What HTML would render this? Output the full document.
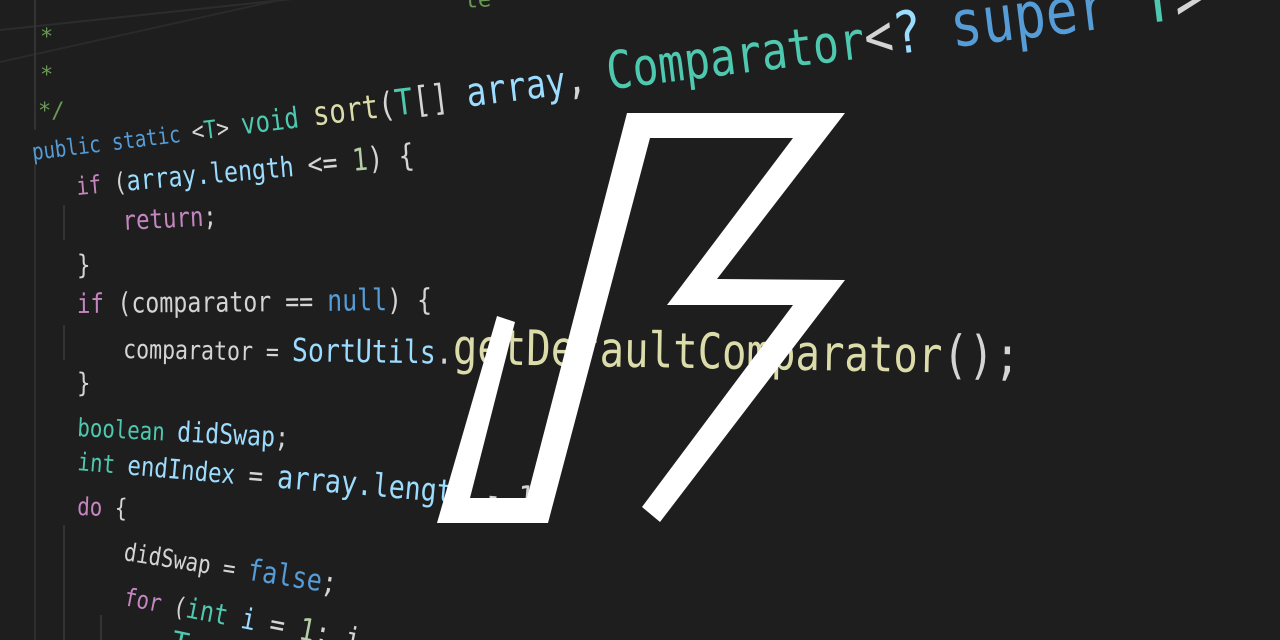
<!DOCTYPE html>
<html><head><meta charset="utf-8"><style>
html,body{margin:0;padding:0;background:#1e1e1e;}
svg{display:block}
text{font-family:"DejaVu Sans Mono","Liberation Mono",monospace;}
</style></head><body>
<svg width="1280" height="640" viewBox="0 0 1280 640" xmlns="http://www.w3.org/2000/svg">
<rect width="1280" height="640" fill="#1e1e1e"/>
<line x1="0" y1="30" x2="330" y2="-5" stroke="#2c2c2c" stroke-width="2"/>
<line x1="0" y1="62" x2="280" y2="0" stroke="#2a2a2a" stroke-width="2"/>
<line x1="35" y1="0" x2="35" y2="130" stroke="#3a3a3a" stroke-width="1.5"/>
<line x1="35" y1="165" x2="35" y2="640" stroke="#333" stroke-width="1.5"/>
<line x1="64" y1="205" x2="64" y2="240" stroke="#3a3a3a" stroke-width="1.5"/>
<line x1="64" y1="325" x2="64" y2="360" stroke="#3a3a3a" stroke-width="1.5"/>
<line x1="64" y1="525" x2="64" y2="640" stroke="#3a3a3a" stroke-width="1.5"/>
<line x1="101" y1="615" x2="101" y2="640" stroke="#3a3a3a" stroke-width="1.5"/>

<g fill="#6a9955" font-size="22">
<text x="40" y="44">*</text>
<text x="40" y="82">*</text>
<text x="38" y="118">*/</text>
<text x="465" y="8" transform="rotate(-4 465 8)">te</text>
</g>

<g transform="translate(33 160) rotate(-7) scale(0.83 1)">
<text x="0" y="0" fill="#569cd6"><tspan font-size="23">public static </tspan><tspan font-size="25" fill="#d4d4d4">&lt;</tspan><tspan font-size="25" fill="#4ec9b0">T</tspan><tspan font-size="25" fill="#d4d4d4">&gt; </tspan><tspan font-size="29" fill="#4ec9b0">void </tspan><tspan font-size="33" fill="#dcdcaa">sort</tspan><tspan font-size="34" fill="#d4d4d4">(</tspan><tspan font-size="36" fill="#4ec9b0">T</tspan><tspan font-size="36" fill="#d4d4d4">[] </tspan><tspan font-size="40" fill="#9cdcfe">array</tspan><tspan font-size="42" fill="#d4d4d4">, </tspan><tspan font-size="52" fill="#4ec9b0">Comparator</tspan><tspan font-size="58" fill="#d4d4d4">&lt;</tspan><tspan font-size="58" fill="#9cdcfe">? </tspan><tspan font-size="64" fill="#569cd6">super </tspan><tspan font-size="67" fill="#4ec9b0">T</tspan><tspan font-size="67" fill="#d4d4d4">&gt;</tspan></text></g>

<g transform="translate(77 195) rotate(-5) scale(0.83 1)">
<text x="0" y="0" fill="#d4d4d4"><tspan font-size="25" fill="#c586c0">if </tspan><tspan font-size="26">(</tspan><tspan font-size="28" fill="#9cdcfe">array.length </tspan><tspan font-size="30">&lt;= </tspan><tspan font-size="31" fill="#b5cea8">1</tspan><tspan font-size="31">) {</tspan></text></g>

<g transform="translate(123 230) rotate(-3) scale(0.83 1)">
<text x="0" y="0" font-size="27"><tspan fill="#c586c0">return</tspan><tspan fill="#d4d4d4">;</tspan></text></g>

<g transform="translate(77 274) scale(0.83 1)"><text x="0" y="0" font-size="27" fill="#d4d4d4">}</text></g>

<g transform="translate(77 313) rotate(-0.5) scale(0.83 1)">
<text x="0" y="0" fill="#d4d4d4"><tspan font-size="27" fill="#c586c0">if </tspan><tspan font-size="28">(comparator == </tspan><tspan font-size="30" fill="#569cd6">null</tspan><tspan font-size="30">) {</tspan></text></g>

<g transform="translate(123 358) rotate(1) scale(0.83 1)">
<text x="0" y="0" fill="#d4d4d4"><tspan font-size="26">comparator = </tspan><tspan font-size="32" fill="#9cdcfe">SortUtils</tspan><tspan font-size="34">.</tspan><tspan font-size="49" fill="#dcdcaa">getDefaultComparator</tspan><tspan font-size="52">();</tspan></text></g>

<g transform="translate(77 392) scale(0.83 1)"><text x="0" y="0" font-size="27" fill="#d4d4d4">}</text></g>

<g transform="translate(77 436) rotate(3) scale(0.83 1)">
<text x="0" y="0"><tspan font-size="25" fill="#4ec9b0">boolean </tspan><tspan font-size="28" fill="#9cdcfe">didSwap</tspan><tspan font-size="28" fill="#d4d4d4">;</tspan></text></g>

<g transform="translate(77 470) rotate(5) scale(0.83 1)">
<text x="0" y="0"><tspan font-size="25" fill="#4ec9b0">int </tspan><tspan font-size="27" fill="#9cdcfe">endIndex </tspan><tspan font-size="29" fill="#d4d4d4">= </tspan><tspan font-size="32" fill="#9cdcfe">array.length</tspan><tspan font-size="33" fill="#d4d4d4"> - 1;</tspan></text></g>

<g transform="translate(77 515) rotate(2) scale(0.83 1)">
<text x="0" y="0" font-size="25"><tspan fill="#c586c0">do </tspan><tspan fill="#d4d4d4">{</tspan></text></g>

<g transform="translate(123 560) rotate(9) scale(0.83 1)">
<text x="0" y="0"><tspan font-size="25" fill="#d4d4d4">didSwap = </tspan><tspan font-size="30" fill="#569cd6">false</tspan><tspan font-size="30" fill="#d4d4d4">;</tspan></text></g>

<g transform="translate(123 605) rotate(11) scale(0.83 1)">
<text x="0" y="0"><tspan font-size="25" fill="#c586c0">for </tspan><tspan font-size="26" fill="#d4d4d4">(</tspan><tspan font-size="28" fill="#4ec9b0">int </tspan><tspan font-size="29" fill="#9cdcfe">i </tspan><tspan font-size="30" fill="#d4d4d4">= </tspan><tspan font-size="31" fill="#b5cea8">1</tspan><tspan font-size="31" fill="#d4d4d4">; i</tspan></text></g>

<text x="170" y="650" transform="rotate(12 170 650)" font-size="28" fill="#4ec9b0">T</text>

<path d="M627,113 L845,113 L717,279 L845,280 L660,522 L642,507 L793,305 L667,305 L793,138 L650,138 L548,523 L437,523 L497,316 L515,322 L470,498 L527,498 Z" fill="#ffffff"/>
</svg>
</body></html>
